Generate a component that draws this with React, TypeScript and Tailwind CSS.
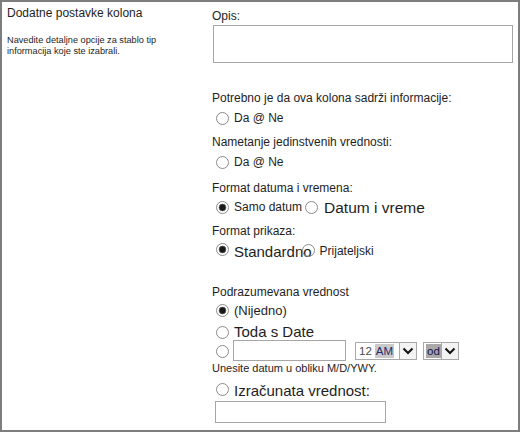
import React from 'react';

function Radio({
  checked = false,
  hollow = false,
  className = '',
}: {
  checked?: boolean;
  hollow?: boolean;
  className?: string;
}) {
  return (
    <svg width="13" height="13" viewBox="0 0 13 13" className={`shrink-0 ${className}`}>
      <circle cx="6.5" cy="6.5" r="6" fill={hollow ? 'none' : '#fff'} stroke="#8a8a8a" strokeWidth="1" />
      {checked && <circle cx="6.5" cy="6.5" r="3.4" fill="#1a1a1a" stroke="#555" strokeWidth="0.6" />}
    </svg>
  );
}

function Chevron() {
  return (
    <div className="flex h-full w-[17px] items-center justify-center border-l border-[#a9a9a9] bg-[#f3f3f3]">
      <svg width="12" height="8" viewBox="0 0 12 8">
        <polyline points="1.5,1.5 6,6 10.5,1.5" fill="none" stroke="#111" strokeWidth="2" />
      </svg>
    </div>
  );
}

export default function App() {
  return (
    <div className="flex h-[432px] w-[520px] border-2 border-[#7d7d7d] bg-white font-['Liberation_Sans',Arial,sans-serif] text-[#1e1e1e]">
      {/* left column */}
      <div className="w-[210px] shrink-0 pl-[5px] pt-[4px]">
        <div className="h-[14px] text-[12px] leading-[14px]">Dodatne postavke kolona</div>
        <div className="mt-[15px] text-[9.2px] leading-[11px]">
          Navedite detaljne opcije za stablo tip
          <br />
          informacija koje ste izabrali.
        </div>
      </div>

      {/* right column */}
      <div className="flex flex-1 flex-col pt-[7px] text-[12px] leading-[14px]">
        <div className="h-[14px]">Opis:</div>
        <div className="ml-[1px] mt-[2px] h-[38px] w-[300px] border border-[#a6a6a6] bg-white" />

        <div className="mt-[28px] h-[14px]">Potrebno je da ova kolona sadrži informacije:</div>
        <div className="mt-[5px] flex h-[16px] items-center pl-[4px]">
          <Radio />
          <span className="ml-[5px] leading-[16px]">Da @ Ne</span>
        </div>

        <div className="mt-[9px] h-[14px]">Nametanje jedinstvenih vrednosti:</div>
        <div className="mt-[5px] flex h-[16px] items-center pl-[4px]">
          <Radio />
          <span className="ml-[5px] leading-[16px]">Da @ Ne</span>
        </div>

        <div className="mt-[11px] h-[14px]">Format datuma i vremena:</div>
        <div className="mt-[3px] flex h-[20px] items-start pl-[4px]">
          <Radio checked className="mt-[2.5px]" />
          <span className="ml-[5px] mt-[2px]">Samo datum</span>
          <Radio className="ml-[3px] mt-[2.5px]" />
          <span className="ml-[6px] mt-[1px] text-[15.5px] leading-[18px]">Datum i vreme</span>
        </div>

        <div className="mt-[6px] h-[14px]">Format prikaza:</div>
        <div className="mt-[2px] flex h-[20px] items-start pl-[4px]">
          <Radio checked className="mt-[2.5px]" />
          <span className="ml-[5px] mt-[3px] text-[15px] leading-[18px]">Standardno</span>
          <Radio hollow className="ml-[-10px] mt-[4px]" />
          <span className="ml-[5px] mt-[4px]">Prijateljski</span>
        </div>

        <div className="mt-[25px] h-[14px]">Podrazumevana vrednost</div>
        <div className="mt-[2px] flex h-[18px] items-start pl-[4px]">
          <Radio checked className="mt-[2.5px]" />
          <span className="ml-[5px] mt-[2px] text-[13px] leading-[15px]">(Nijedno)</span>
        </div>
        <div className="flex h-[21px] items-start pl-[4px]">
          <Radio className="mt-[6.5px]" />
          <span className="ml-[5px] mt-[4px] text-[15px] leading-[18px]">Toda s Date</span>
        </div>
        <div className="flex h-[21px] items-start pl-[4px]">
          <Radio className="mt-[4.5px]" />
          <div className="ml-[4px] h-[21px] w-[113px] border border-[#a6a6a6] bg-white" />
          <div className="ml-[9px] mt-[2px] flex h-[18px] w-[62px] border border-[#a9a9a9] bg-white">
            <div className="flex flex-1 items-center pl-[3px] text-[11.5px] leading-[14px]">
              <span className="text-[#4a4a4a]">12</span>
              <span className="ml-[3px] bg-[#c9c9c9] px-[1px] text-[#2a2a6a]">AM</span>
            </div>
            <Chevron />
          </div>
          <div className="ml-[6px] mt-[2px] flex h-[18px] w-[36px] border border-[#a9a9a9] bg-white">
            <div className="flex flex-1 items-center pl-[2px] text-[11.5px] leading-[14px]">
              <span className="bg-[#a9a9a9] px-[1px] text-[#10104a]">od</span>
            </div>
            <Chevron />
          </div>
        </div>
        <div className="mt-[1px] h-[13px] text-[11px] leading-[13px] text-[#2a1a1a]">
          Unesite datum u obliku M/D/YWY.
        </div>
        <div className="mt-[5px] flex h-[18px] items-start pl-[4px]">
          <Radio className="mt-[2.5px]" />
          <span className="ml-[5px] mt-[2px] text-[15px] leading-[18px]">Izračunata vrednost:</span>
        </div>
        <div className="ml-[3px] mt-[3px] h-[22px] w-[171px] border border-[#a6a6a6] bg-white" />
      </div>
    </div>
  );
}
